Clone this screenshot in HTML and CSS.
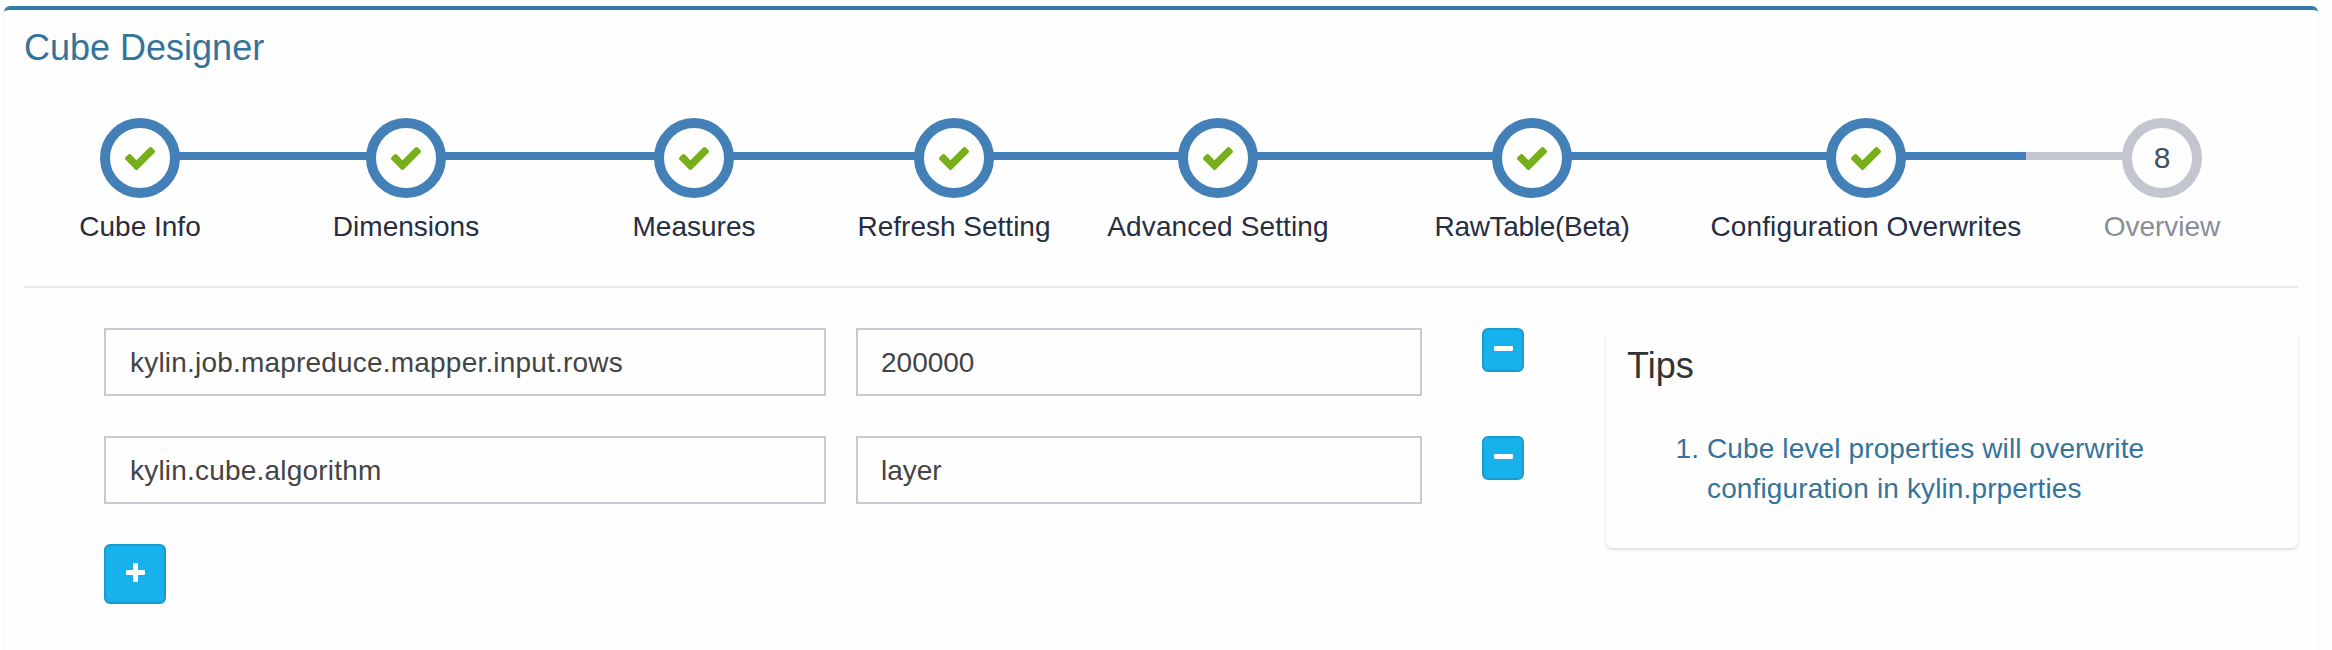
FILE: index.html
```html
<!DOCTYPE html>
<html lang="en">
<head>
<meta charset="utf-8">
<title>Cube Designer</title>
<link rel="stylesheet" href="styles.css">
</head>
<body>
<svg class="defs" width="0" height="0">
  <symbol id="check" viewBox="121 334 1550 1188"><path d="M1671 566q0 40-28 68l-724 724-136 136q-28 28-68 28t-68-28l-136-136-362-362q-28-28-28-68t28-68l136-136q28-28 68-28t68 28l294 295 656-657q28-28 68-28t68 28l136 136q28 28 28 68z"/></symbol>
</svg>
<main class="panel">
  <h1 class="title">Cube Designer</h1>
  <ul class="steps">
    <li class="step"><span class="circle"><svg class="check"><use href="#check"/></svg></span><span class="label">Cube Info</span></li>
    <li class="step"><span class="circle"><svg class="check"><use href="#check"/></svg></span><span class="label">Dimensions</span></li>
    <li class="step"><span class="circle"><svg class="check"><use href="#check"/></svg></span><span class="label">Measures</span></li>
    <li class="step"><span class="circle"><svg class="check"><use href="#check"/></svg></span><span class="label">Refresh Setting</span></li>
    <li class="step"><span class="circle"><svg class="check"><use href="#check"/></svg></span><span class="label loose">Advanced Setting</span></li>
    <li class="step"><span class="circle"><svg class="check"><use href="#check"/></svg></span><span class="label tight">RawTable(Beta)</span></li>
    <li class="step"><span class="circle"><svg class="check"><use href="#check"/></svg></span><span class="label loose">Configuration Overwrites</span></li>
    <li class="step pending"><span class="circle">8</span><span class="label">Overview</span></li>
  </ul>
  <div class="content">
    <form class="properties">
      <div class="row">
        <input class="field key" type="text" value="kylin.job.mapreduce.mapper.input.rows">
        <input class="field value" type="text" value="200000">
        <button class="btn remove" type="button" aria-label="Remove"><svg class="minus" viewBox="0 0 19 5"><rect width="19" height="5" rx="1.2"/></svg></button>
      </div>
      <div class="row">
        <input class="field key" type="text" value="kylin.cube.algorithm">
        <input class="field value" type="text" value="layer">
        <button class="btn remove" type="button" aria-label="Remove"><svg class="minus" viewBox="0 0 19 5"><rect width="19" height="5" rx="1.2"/></svg></button>
      </div>
      <button class="btn add" type="button" aria-label="Add"><svg class="plus" viewBox="0 0 19 19"><rect y="7" width="19" height="5" rx="1.2"/><rect x="7" width="5" height="19" rx="1.2"/></svg></button>
    </form>
    <aside class="tips">
      <h2 class="tips-title">Tips</h2>
      <ol class="tips-list">
        <li>Cube level properties will overwrite configuration in kylin.prperties</li>
      </ol>
    </aside>
  </div>
</main>
</body>
</html>
```
FILE: styles.css
```css
* { box-sizing: border-box; }
html, body { height: 100%; }
body {
  margin: 0;
  padding: 6px 14px 0 4px;
  overflow: hidden;
  background: #fefefe;
  font-family: "Liberation Sans", Arial, sans-serif;
  font-size: 28px;
  color: #333;
}
.defs { display: block; }
.panel {
  height: 644px;
  padding: 0 20px;
  border-top: 4px solid #357ca8;
  border-radius: 6px 6px 0 0;
  background: #fefefe;
  box-shadow: 0 2px 2px rgba(0, 0, 0, .1);
}
.title {
  margin: 0;
  padding-top: 18px;
  height: 108px;
  font-size: 36px;
  line-height: 40px;
  font-weight: 400;
  color: #34749b;
}
.steps {
  display: grid;
  grid-template-columns: 228px 304px 272px 248px 280px 348px 320px 272px;
  height: 170px;
  margin: 0;
  padding: 0 0 0 2px;
  list-style: none;
  border-bottom: 2px solid #e8e8e8;
}
.step {
  position: relative;
  display: flex;
  flex-direction: column;
  align-items: center;
}
.step::before {
  content: "";
  position: absolute;
  top: 34px;
  left: 0;
  width: 100%;
  height: 8px;
  background: #4480b8;
}
.step:first-child::before { left: 50%; width: 50%; }
.step.pending::before { width: 50%; background: #c3c6cf; }
.circle {
  position: relative;
  display: flex;
  align-items: center;
  justify-content: center;
  width: 80px;
  height: 80px;
  border: 10px solid #4480b8;
  border-radius: 50%;
  background: #fefefe;
  font-size: 30px;
  color: #435062;
}
.pending .circle { border-color: #c3c6cf; }
.check { width: 30px; height: 23px; margin-top: 1px; fill: #78ae1c; }
.label {
  margin-top: 13px;
  line-height: 32px;
  white-space: nowrap;
  color: #262e40;
}
.label.loose { letter-spacing: .12px; }
.label.tight { letter-spacing: -.3px; }
.pending .label { color: #888e96; }
.content {
  display: grid;
  grid-template-columns: 1422px 692px;
  column-gap: 80px;
  align-items: start;
  padding: 40px 0 0 80px;
}
.properties { display: flex; flex-direction: column; gap: 40px; }
.row { display: flex; align-items: flex-start; }
.field {
  height: 68px;
  padding: 2px 24px 0;
  border: 2px solid #c8cad2;
  border-radius: 0;
  outline: none;
  background: #fefefe;
  font: inherit;
  color: #444;
}
.key { width: 722px; margin-right: 30px; letter-spacing: .2px; }
.value { width: 566px; margin-right: 60px; padding-left: 23px; }
.btn {
  display: flex;
  align-items: center;
  justify-content: center;
  padding: 0;
  border: 2px solid #1a9bcb;
  border-radius: 6px;
  background: #17b2ec;
}
.btn svg { fill: #fff; }
.remove { width: 42px; height: 44px; }
.minus { width: 19px; height: 5px; margin-top: -3px; }
.add { width: 62px; height: 60px; }
.plus { width: 19px; height: 19px; margin-top: -3px; }
.tips {
  height: 220px;
  padding: 18px 20px 18px 21px;
  border-radius: 6px;
  background: #fefefe;
  box-shadow: 0 2px 3px rgba(0, 0, 0, .13);
}
.tips-title { margin: 0; font-size: 36px; line-height: 40px; font-weight: 400; }
.tips-list {
  margin: 43px 0 0;
  padding-left: 80px;
  padding-right: 110px;
  line-height: 40px;
  letter-spacing: .13px;
  color: #34749b;
}
```
